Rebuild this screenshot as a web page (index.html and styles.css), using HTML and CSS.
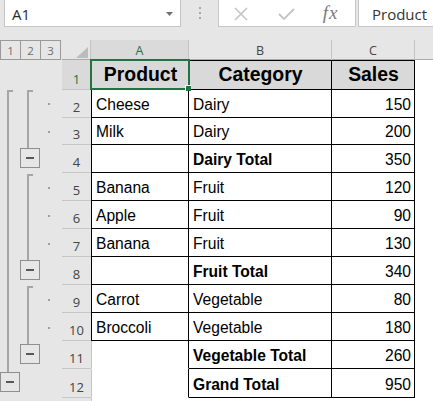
FILE: index.html
```html
<!DOCTYPE html>
<html>
<head>
<meta charset="utf-8">
<title>Sheet</title>
<link rel="stylesheet" href="styles.css">
</head>
<body>
<div class="app">
  <div class="toolbar">
    <div class="namebox"><span class="nb-text">A1</span><span class="nb-arrow"></span></div>
    <div class="grip"><i></i><i></i><i></i></div>
    <div class="fbtns">
      <span class="slot"><svg width="14" height="14" viewBox="0 0 14 14"><path d="M1 1L13 13M13 1L1 13" stroke="#c4c4c4" stroke-width="1.6" fill="none"/></svg></span>
      <span class="slot"><svg width="17" height="12" viewBox="0 0 17 12"><path d="M1 6L6 11L16 1" stroke="#c4c4c4" stroke-width="1.8" fill="none"/></svg></span>
      <span class="slot fx">fx</span>
    </div>
    <div class="fbox">Product</div>
  </div>
  <div class="sheet">
    <svg class="outline" width="62" height="341" viewBox="0 0 62 341">
      <g fill="#a6a6a6">
        <rect x="7" y="30" width="2" height="282"/><rect x="7" y="30" width="6" height="2"/>
        <rect x="27" y="30" width="2" height="58"/><rect x="27" y="30" width="6" height="2"/>
        <rect x="27" y="114" width="2" height="86"/><rect x="27" y="114" width="6" height="2"/>
        <rect x="27" y="226" width="2" height="58"/><rect x="27" y="226" width="6" height="2"/>
      </g>
      <g fill="none" stroke="#8f8f8f">
        <rect x="20.5" y="88.5" width="19" height="19"/>
        <rect x="20.5" y="200.5" width="19" height="19"/>
        <rect x="20.5" y="284.5" width="19" height="19"/>
        <rect x="0.5" y="312.5" width="19" height="19"/>
      </g>
      <g fill="#595959">
        <rect x="26" y="97" width="8" height="2"/>
        <rect x="26" y="209" width="8" height="2"/>
        <rect x="26" y="293" width="8" height="2"/>
        <rect x="6" y="321" width="8" height="2"/>
      </g>
      <g fill="#a0a0a0">
        <rect x="48" y="43" width="2" height="2"/>
        <rect x="48" y="71" width="2" height="2"/>
        <rect x="48" y="127" width="2" height="2"/>
        <rect x="48" y="155" width="2" height="2"/>
        <rect x="48" y="183" width="2" height="2"/>
        <rect x="48" y="239" width="2" height="2"/>
        <rect x="48" y="267" width="2" height="2"/>
      </g>
    </svg>

    <div class="levels"><span class="lvl">1</span><span class="lvl">2</span><span class="lvl last">3</span></div>
    <div class="corner"><span class="tri"></span></div>
    <div class="ch sel">A</div>
    <div class="ch">B</div>
    <div class="ch">C</div>
    <div class="ch rest-h"></div>

    <div class="rh sel">1</div>
    <div class="c a h a1">Product<span class="selbox"><span class="handle"></span></span></div>
    <div class="c h">Category</div>
    <div class="c h">Sales</div>
    <div class="rest"></div>

    <div class="rh">2</div>
    <div class="c a">Cheese</div>
    <div class="c">Dairy</div>
    <div class="c num">150</div>
    <div class="rest"></div>

    <div class="rh">3</div>
    <div class="c a">Milk</div>
    <div class="c">Dairy</div>
    <div class="c num">200</div>
    <div class="rest"></div>

    <div class="rh">4</div>
    <div class="c a"></div>
    <div class="c b">Dairy Total</div>
    <div class="c num">350</div>
    <div class="rest"></div>

    <div class="rh">5</div>
    <div class="c a">Banana</div>
    <div class="c">Fruit</div>
    <div class="c num">120</div>
    <div class="rest"></div>

    <div class="rh">6</div>
    <div class="c a">Apple</div>
    <div class="c">Fruit</div>
    <div class="c num">90</div>
    <div class="rest"></div>

    <div class="rh">7</div>
    <div class="c a">Banana</div>
    <div class="c">Fruit</div>
    <div class="c num">130</div>
    <div class="rest"></div>

    <div class="rh">8</div>
    <div class="c a"></div>
    <div class="c b">Fruit Total</div>
    <div class="c num">340</div>
    <div class="rest"></div>

    <div class="rh">9</div>
    <div class="c a">Carrot</div>
    <div class="c">Vegetable</div>
    <div class="c num">80</div>
    <div class="rest"></div>

    <div class="rh">10</div>
    <div class="c a">Broccoli</div>
    <div class="c">Vegetable</div>
    <div class="c num">180</div>
    <div class="rest"></div>

    <div class="rh">11</div>
    <div class="c a open"></div>
    <div class="c b">Vegetable Total</div>
    <div class="c num">260</div>
    <div class="rest"></div>

    <div class="rh">12</div>
    <div class="c a open"></div>
    <div class="c b">Grand Total</div>
    <div class="c num">950</div>
    <div class="rest"></div>

    <div class="rh last"></div>
    <div class="blank a-edge"></div>
    <div class="blank"></div>
    <div class="blank"></div>
    <div class="rest"></div>
  </div>
</div>
</body>
</html>
```

FILE: styles.css
```css
* { box-sizing: border-box; margin: 0; padding: 0; }
html, body { width: 433px; height: 401px; overflow: hidden; background: #e6e6e6; }
body { font-family: "Liberation Sans", Arial, sans-serif; color: #000; }

.app { display: flex; flex-direction: column; height: 401px; }

/* toolbar */
.toolbar { display: flex; height: 27px; margin-bottom: 13px; flex: none; }
.namebox {
  width: 177px; margin-left: 4px; background: #fff;
  border: 1px solid #c6c6c6; border-top: none;
  display: flex; align-items: center; justify-content: space-between;
  padding: 1px 7px 0 7px;
  font-family: "Open Sans", sans-serif; font-size: 15px; color: #2b2b2b;
}
.nb-arrow {
  width: 7px; height: 4px; background: #707070;
  clip-path: polygon(0 0, 100% 0, 50% 100%);
  margin-top: 1px;
}
.grip { width: 37px; display: flex; flex-direction: column; align-items: center; justify-content: center; gap: 3px; padding-bottom: 1px; }
.grip i { display: block; width: 2px; height: 2px; background: #a8a8a8; margin-left: 1px; }
.fbtns {
  width: 138px; background: #fff; border: 1px solid #c6c6c6; border-top: none;
  display: grid; grid-template-columns: 44px 46px 1fr; align-items: center;
}
.slot { display: flex; justify-content: center; align-items: center; height: 100%; padding-top: 1px; }
.fx { font-family: "Liberation Serif", serif; font-style: italic; font-size: 19px; color: #7a7a7a; letter-spacing: 1px; padding-right: 3px; padding-bottom: 1px; }
.fbox {
  flex: 1; margin-left: 2px; background: #fff; border: 1px solid #c6c6c6; border-top: none; border-right: none;
  display: flex; align-items: center; padding: 1px 0 0 13px;
  font-family: "Open Sans", sans-serif; font-size: 15px; color: #333;
}

/* sheet */
.sheet {
  flex: 1; min-height: 0;
  display: grid;
  grid-template-columns: 62px 29px 98px 143px 83px 1fr;
  grid-template-rows: 20px 30px 28px 27px repeat(8, 28px) 29px 1fr;
}
.outline { grid-column: 1; grid-row: 2 / -1; display: block; }

.levels { display: flex; }
.lvl {
  width: 20px; height: 20px; border: 1px solid #9a9a9a; border-right: none;
  display: flex; align-items: center; justify-content: center;
  font-family: "Open Sans", sans-serif; font-size: 11.5px; color: #6e6e6e;
}
.lvl.last { width: 21px; border-right: 1px solid #9a9a9a; }

.corner {
  border-right: 1px solid #c4c4c4; border-bottom: 1px solid #ababab;
  display: flex; justify-content: flex-end; align-items: flex-end;
  padding: 0 2px 1px 0;
}
.tri { width: 12px; height: 11px; background: #bcbcbc; clip-path: polygon(100% 0, 100% 100%, 0 100%); }

.ch {
  border-right: 1px solid #c4c4c4; border-bottom: 1px solid #ababab;
  display: flex; align-items: center; justify-content: center; padding-top: 1px;
  font-family: "Open Sans", sans-serif; font-size: 12.5px; color: #444;
}
.ch.sel { background: #dadada; color: #217346; }
.ch.rest-h { border-right: none; }

.rh {
  border-bottom: 1px solid #c6c6c6;
  display: flex; justify-content: center; align-items: flex-end;
  padding-bottom: 2px;
  font-family: "Open Sans", sans-serif; font-size: 13px; line-height: 15px; color: #444;
}
.rh.sel { background: #dadada; color: #217346; }
.rh.last { border-bottom: none; }

.c {
  background: #fff; border-right: 1px solid #000; border-bottom: 1px solid #000;
  display: flex; align-items: flex-end;
  padding: 0 3px 3px 4px;
  font-size: 15.6px; line-height: 18px; white-space: nowrap;
}
.c.a { border-left: 1px solid #000; }
.c.b { font-weight: bold; }
.c.num { justify-content: flex-end; }
.c.h {
  background: #d9d9d9; border-top: 1px solid #000;
  font-weight: bold; font-size: 19.4px; line-height: 22px;
  justify-content: center; padding-bottom: 4px;
}
.c.open { border-left-color: #c6c6c6; border-bottom-color: #fff; }
.a1 { position: relative; }
.selbox {
  position: absolute; left: -2px; top: -2px; right: -2px; bottom: -1px;
  border: 2px solid #217346; z-index: 2;
}
.handle {
  position: absolute; right: -3px; bottom: -3px; width: 6px; height: 6px;
  background: #217346; border-left: 1px solid #fff; border-top: 1px solid #fff;
}
.rest { background: #fff; }
.blank { background: #fff; }
.blank.a-edge { border-left: 1px solid #c6c6c6; }
```
